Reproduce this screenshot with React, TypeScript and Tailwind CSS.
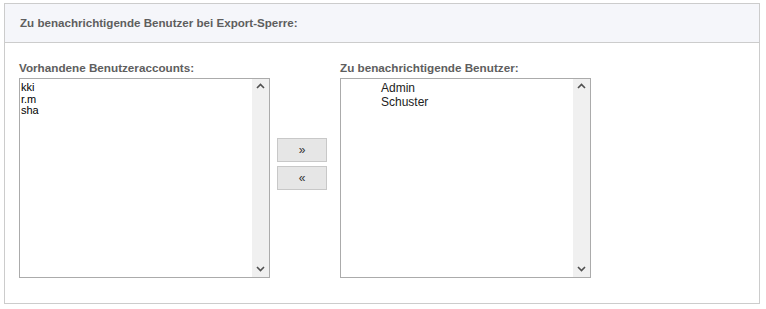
const Up = () => (
  <svg width="9" height="6" viewBox="0 0 9 6" className="block">
    <path d="M1 5 L4.5 1.5 L8 5" fill="none" stroke="#505050" strokeWidth="1.6" />
  </svg>
);
const Down = () => (
  <svg width="9" height="6" viewBox="0 0 9 6" className="block">
    <path d="M1 1 L4.5 4.5 L8 1" fill="none" stroke="#505050" strokeWidth="1.6" />
  </svg>
);

function ListBox({ items, small, indent }: { items: string[]; small?: boolean; indent?: boolean }) {
  return (
    <div className="flex h-[200px] w-[251px] border border-[#ababab] bg-white">
      <div
        className={`flex-1 overflow-hidden pt-[3px] ${
          small
            ? "pl-[1px] text-[11px] leading-[11.5px] text-black"
            : "text-[12px] leading-[13.5px] text-[#222]"
        } ${indent ? "pl-[40px]" : ""}`}
        style={{ fontFamily: '"Liberation Sans", Arial, sans-serif' }}
      >
        {items.map((it) => (
          <div key={it}>{it}</div>
        ))}
      </div>
      <div className="flex w-[17px] flex-col items-center justify-between bg-[#f0f0f0] pt-[4px] pb-[5px]">
        <Up />
        <Down />
      </div>
    </div>
  );
}

export default function App() {
  return (
    <div
      className="pl-[4px] pt-[3px]"
      style={{ fontFamily: '"Liberation Sans", Arial, sans-serif' }}
    >
      <div className="h-[301px] w-[756px] border border-[#cccccc] bg-white">
        <div className="flex h-[39px] items-center border-b border-[#cccccc] bg-[#f5f6fa] pl-[15px] text-[11.6px] font-bold text-[#5e5e5e]">
          Zu benachrichtigende Benutzer bei Export-Sperre:
        </div>
        <div className="flex pl-[14px] pt-[18px]">
          <div className="w-[251px]">
            <div className="mb-[4px] text-[11.7px] leading-[13px] font-bold text-[#5e5e5e]">
              Vorhandene Benutzeraccounts:
            </div>
            <ListBox items={["kki", "r.m", "sha"]} small />
          </div>
          <div className="flex w-[70px] flex-col gap-[4px] pl-[7px] pt-[77px]">
            <button className="flex h-[24px] w-[50px] items-center justify-center border border-[#c8c8c8] bg-[#e6e6e6] text-[12px] text-[#333]">
              »
            </button>
            <button className="flex h-[24px] w-[50px] items-center justify-center border border-[#c8c8c8] bg-[#e6e6e6] text-[12px] text-[#333]">
              «
            </button>
          </div>
          <div className="w-[251px]">
            <div className="mb-[4px] text-[11.7px] leading-[13px] font-bold text-[#5e5e5e]">
              Zu benachrichtigende Benutzer:
            </div>
            <ListBox items={["Admin", "Schuster"]} indent />
          </div>
        </div>
      </div>
    </div>
  );
}
